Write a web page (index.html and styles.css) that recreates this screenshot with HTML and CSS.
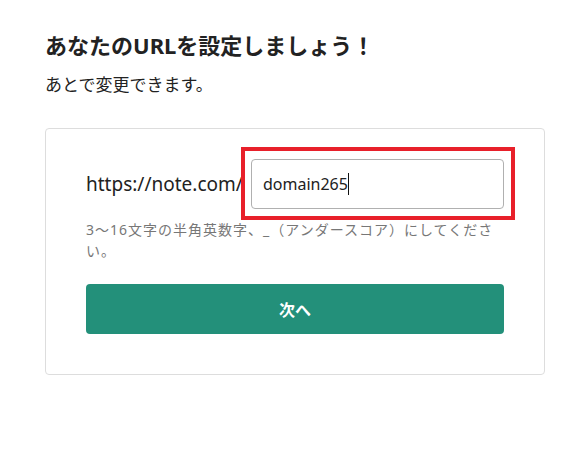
FILE: index.html
```html
<!DOCTYPE html>
<html lang="ja">
<head>
<meta charset="utf-8">
<link rel="stylesheet" href="styles.css">
</head>
<body>
<main class="page">
  <h1 class="title">あなたのURLを設定しましょう！</h1>
  <p class="lead">あとで変更できます。</p>
  <section class="card">
    <div class="url-row">
      <span class="prefix">https://note.com/</span>
      <div class="field-wrap">
        <div class="field"><span class="value">domain265</span><span class="caret"></span></div>
      </div>
    </div>
    <p class="hint">3〜16文字の半角英数字、_（アンダースコア）にしてください。</p>
    <button class="next">次へ</button>
  </section>
</main>
</body>
</html>
```
FILE: styles.css
```css
* { box-sizing: border-box; }
html, body { margin: 0; background: #fff; }
body {
  font-family: "Noto Sans", "Noto Sans CJK JP", sans-serif;
  color: #222;
}
.page {
  width: 500px;
  margin-left: 45px;
  padding-top: 29px;
}
.title {
  margin: 0;
  font-size: 22px;
  line-height: 32px;
  font-weight: 700;
}
.lead {
  margin: 11px 0 0;
  font-size: 17px;
  line-height: 26px;
}
.card {
  margin-top: 30px;
  border: 1px solid #ddd;
  border-radius: 4px;
  padding: 30px 40px 40px 40px;
}
.url-row {
  display: flex;
  align-items: center;
}
.prefix {
  flex: 1;
  font-size: 19px;
  white-space: nowrap;
}
.field-wrap {
  position: relative;
  width: 253px;
  flex: none;
}
.field-wrap::after {
  content: "";
  position: absolute;
  top: -12px; left: -10px; right: -11px; bottom: -11px;
  border: 4px solid #e8202a;
  pointer-events: none;
}
.field {
  height: 50px;
  border: 1px solid #b0b0b0;
  border-radius: 4px;
  padding: 0 11px;
  display: flex;
  align-items: center;
  font-size: 16px;
}
.caret {
  display: inline-block;
  width: 1px;
  height: 22px;
  background: #111;
}
.hint {
  margin: 10px 0 0;
  font-size: 14px;
  line-height: 21px;
  letter-spacing: 1px;
  color: #777;
}
.next {
  display: block;
  width: 100%;
  height: 50px;
  margin-top: 23px;
  border: none;
  border-radius: 4px;
  background: #23907a;
  color: #fff;
  font-family: inherit;
  font-size: 16px;
  font-weight: 700;
}
```
